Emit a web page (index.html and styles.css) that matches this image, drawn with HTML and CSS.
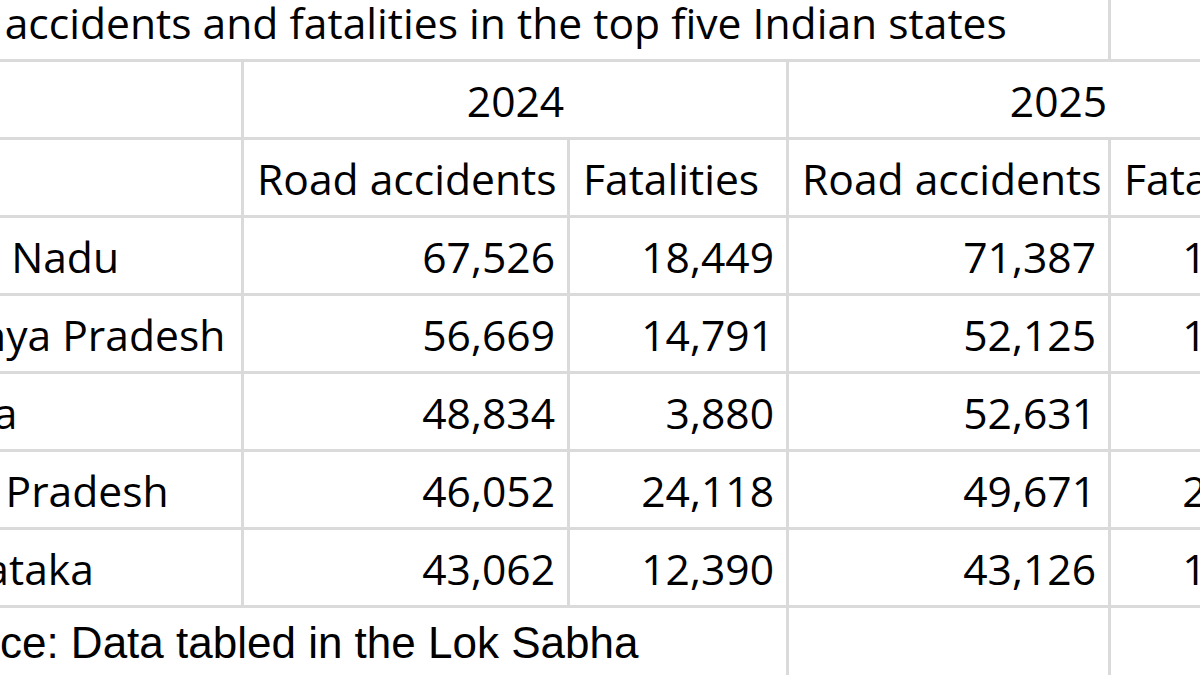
FILE: index.html
```html
<!DOCTYPE html>
<html lang="en">
<head>
<meta charset="utf-8">
<title>Road accidents and fatalities in the top five Indian states</title>
<link rel="stylesheet" href="styles.css">
</head>
<body>
<div class="sheet">
  <div class="cell title span4">Road accidents and fatalities in the top five Indian states</div>
  <div class="cell"></div>

  <div class="cell"></div>
  <div class="cell year span2">2024</div>
  <div class="cell year span2">2025</div>

  <div class="cell"></div>
  <div class="cell">Road accidents</div>
  <div class="cell">Fatalities</div>
  <div class="cell">Road accidents</div>
  <div class="cell">Fatalities</div>

  <div class="cell">Tamil Nadu</div>
  <div class="cell num">67,526</div>
  <div class="cell num">18,449</div>
  <div class="cell num">71,387</div>
  <div class="cell num">18,347</div>

  <div class="cell">Madhya Pradesh</div>
  <div class="cell num">56,669</div>
  <div class="cell num">14,791</div>
  <div class="cell num">52,125</div>
  <div class="cell num">14,175</div>

  <div class="cell">Kerala</div>
  <div class="cell num">48,834</div>
  <div class="cell num">3,880</div>
  <div class="cell num">52,631</div>
  <div class="cell num">4,012</div>

  <div class="cell">Uttar Pradesh</div>
  <div class="cell num">46,052</div>
  <div class="cell num">24,118</div>
  <div class="cell num">49,671</div>
  <div class="cell num">23,652</div>

  <div class="cell">Karnataka</div>
  <div class="cell num">43,062</div>
  <div class="cell num">12,390</div>
  <div class="cell num">43,126</div>
  <div class="cell num">12,321</div>

  <div class="cell source span3">Source: Data tabled in the Lok Sabha</div>
  <div class="cell"></div>
  <div class="cell"></div>
</div>
</body>
</html>
```
FILE: styles.css
```css
html, body {
  margin: 0;
  padding: 0;
  background: #ffffff;
}

body {
  width: 1200px;
  height: 675px;
  overflow: hidden;
}

.sheet {
  display: grid;
  grid-template-columns: 362px 323px 216px 319px 216px;
  grid-template-rows: 59px repeat(7, 75px) 75px;
  gap: 3px;
  width: max-content;
  margin-left: -121px;
  background: #dadada;
  font-family: "Open Sans", Lato, sans-serif;
  font-size: 42.6px;
  color: #000000;
}

.cell {
  background: #ffffff;
  display: flex;
  align-items: flex-end;
  padding: 0 12px 15px 13px;
  line-height: 1;
  white-space: nowrap;
  min-width: 0;
}

.span2 { grid-column: span 2; }
.span3 { grid-column: span 3; }
.span4 { grid-column: span 4; }

.num {
  justify-content: flex-end;
}

.year {
  justify-content: center;
}

.source {
  font-family: "Liberation Sans", Arial, sans-serif;
  font-size: 44px;
  padding-left: 28px;
  padding-bottom: 18px;
}
```
